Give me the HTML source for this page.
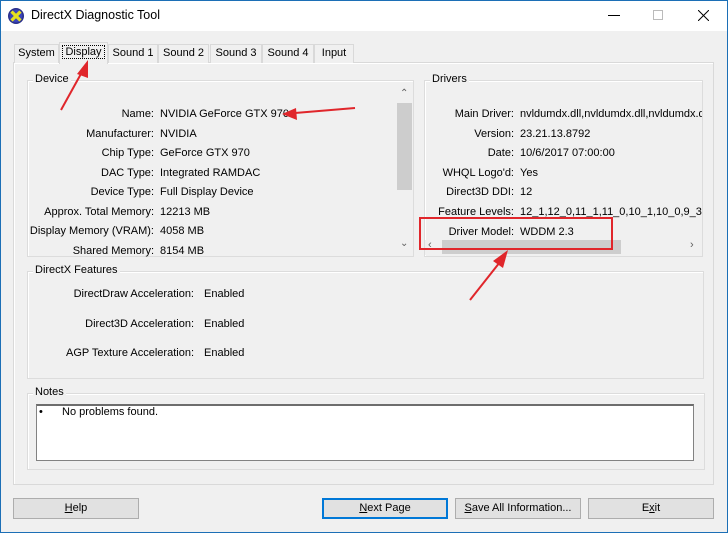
<!DOCTYPE html>
<html><head><meta charset="utf-8"><style>
*{margin:0;padding:0;box-sizing:border-box}
body{width:728px;height:533px;overflow:hidden;background:#f0f0f0;font-family:"Liberation Sans",sans-serif;font-size:11px;color:#000;position:relative}
.a{position:absolute;white-space:nowrap}
.win{position:absolute;left:0;top:0;width:728px;height:533px;border:1px solid #1c6fb6}
.title{position:absolute;left:1px;top:1px;width:726px;height:30px;background:#fff}
.grp{position:absolute;border:1px solid #dcdcdc;box-shadow:inset 1px 1px 0 #fff}
.lbl{position:absolute;background:#f0f0f0;padding:0 2px;top:-8px;left:5px}
.tab{position:absolute;top:44px;height:19px;border:1px solid #d9d9d9;border-bottom:none;background:#f0f0f0;text-align:center;line-height:17px}
.r{position:absolute;text-align:right;white-space:nowrap}
.btn{position:absolute;top:498px;height:21px;width:126px;background:#e1e1e1;border:1px solid #adadad;text-align:center;line-height:19px}
</style></head><body>
<div class="win"></div>
<div class="title"></div>
<svg class="a" style="left:7px;top:7px" width="18" height="18" viewBox="0 0 18 18"><circle cx="9" cy="9" r="8" fill="#2a2f8a"/><circle cx="9" cy="9" r="6.5" fill="#3b45b8"/><path d="M4.5 4.5L13.5 13.5M13.5 4.5L4.5 13.5" stroke="#e6e020" stroke-width="3.2"/></svg>
<div class="a" style="left:31px;top:8px;font-size:12.5px">DirectX Diagnostic Tool</div>
<div class="a" style="left:608px;top:15px;width:12px;height:1px;background:#000"></div>
<div class="a" style="left:653px;top:10px;width:10px;height:10px;border:1px solid #bbb"></div>
<svg class="a" style="left:698px;top:10px" width="11" height="11"><path d="M0 0L11 11M11 0L0 11" stroke="#000" stroke-width="1"/></svg>

<div class="a" style="left:13px;top:62px;width:701px;height:423px;border:1px solid #d9d9d9;box-shadow:inset 1px 1px 0 #fff"></div>
<div class="tab" style="left:14px;width:45px">System</div>
<div class="tab" style="left:108px;width:50px">Sound 1</div>
<div class="tab" style="left:158px;width:51px">Sound 2</div>
<div class="tab" style="left:210px;width:52px">Sound 3</div>
<div class="tab" style="left:262px;width:52px">Sound 4</div>
<div class="tab" style="left:314px;width:40px">Input</div>
<div class="tab" style="left:59px;top:42px;height:22px;width:49px;background:#f0f0f0;border-color:#d9d9d9;line-height:18px"><span style="outline:1px dotted #000;padding:0 2px">Display</span></div>

<div class="grp" style="left:27px;top:80px;width:387px;height:177px"><span class="lbl">Device</span></div>
<div class="a" style="left:397px;top:88px;width:16px;height:168px;background:#f0f0f0"></div>
<div class="a" style="left:397px;top:103px;width:15px;height:87px;background:#cdcdcd"></div>
<div class="a" style="left:400px;top:88px;font-size:10px;color:#606060">&#8963;</div>
<div class="a" style="left:400px;top:238px;font-size:10px;color:#606060">&#8964;</div>
<div class="r" style="right:574px;top:105px;line-height:19.5px">Name:<br>Manufacturer:<br>Chip Type:<br>DAC Type:<br>Device Type:<br>Approx. Total Memory:<br>Display Memory (VRAM):<br>Shared Memory:</div>
<div class="a" style="left:160px;top:105px;line-height:19.5px">NVIDIA GeForce GTX 970<br>NVIDIA<br>GeForce GTX 970<br>Integrated RAMDAC<br>Full Display Device<br>12213 MB<br>4058 MB<br>8154 MB</div>

<div class="grp" style="left:424px;top:80px;width:279px;height:177px"><span class="lbl">Drivers</span></div>
<div class="r" style="right:214px;top:105px;line-height:19.6px">Main Driver:<br>Version:<br>Date:<br>WHQL Logo'd:<br>Direct3D DDI:<br>Feature Levels:<br>Driver Model:</div>
<div class="a" style="left:520px;top:105px;line-height:19.6px;width:182px;overflow:hidden">nvldumdx.dll,nvldumdx.dll,nvldumdx.dll<br>23.21.13.8792<br>10/6/2017 07:00:00<br>Yes<br>12<br>12_1,12_0,11_1,11_0,10_1,10_0,9_3<br>WDDM 2.3</div>
<div class="a" style="left:425px;top:240px;width:277px;height:15px;background:#f0f0f0"></div>
<div class="a" style="left:442px;top:240px;width:179px;height:14px;background:#cdcdcd"></div>
<div class="a" style="left:428px;top:239px;font-size:11px;color:#606060">&#8249;</div>
<div class="a" style="left:690px;top:239px;font-size:11px;color:#606060">&#8250;</div>

<div class="grp" style="left:27px;top:271px;width:677px;height:108px"><span class="lbl">DirectX Features</span></div>
<div class="r" style="right:534px;top:288px">DirectDraw Acceleration:</div>
<div class="r" style="right:534px;top:318px">Direct3D Acceleration:</div>
<div class="r" style="right:534px;top:347px">AGP Texture Acceleration:</div>
<div class="a" style="left:204px;top:288px">Enabled</div>
<div class="a" style="left:204px;top:318px">Enabled</div>
<div class="a" style="left:204px;top:347px">Enabled</div>

<div class="grp" style="left:27px;top:393px;width:678px;height:77px"><span class="lbl">Notes</span></div>
<div class="a" style="left:36px;top:404px;width:658px;height:57px;background:#fff;border:1px solid #828282;border-top:2px solid #6d6d6d"></div>
<div class="a" style="left:39px;top:406px">•</div>
<div class="a" style="left:62px;top:406px">No problems found.</div>

<div class="btn" style="left:13px"><u>H</u>elp</div>
<div class="btn" style="left:322px;border:2px solid #0078d7;line-height:17px"><u>N</u>ext Page</div>
<div class="btn" style="left:455px"><u>S</u>ave All Information...</div>
<div class="btn" style="left:588px">E<u>x</u>it</div>

<div class="a" style="left:419px;top:217px;width:194px;height:33px;border:2px solid #e0262b"></div>
<svg class="a" style="left:0;top:0" width="728" height="533">
<g stroke="#e0262b" stroke-width="2" fill="#e0262b">
<line x1="61" y1="110" x2="82" y2="72"/><polygon points="88,60 77,74 88,78" stroke="none"/>
<line x1="355" y1="108" x2="295" y2="113"/><polygon points="282,114 296,108 297,120" stroke="none"/>
<line x1="470" y1="300" x2="500" y2="262"/><polygon points="508,250 493,261 503,268" stroke="none"/>
</g></svg>
</body></html>
